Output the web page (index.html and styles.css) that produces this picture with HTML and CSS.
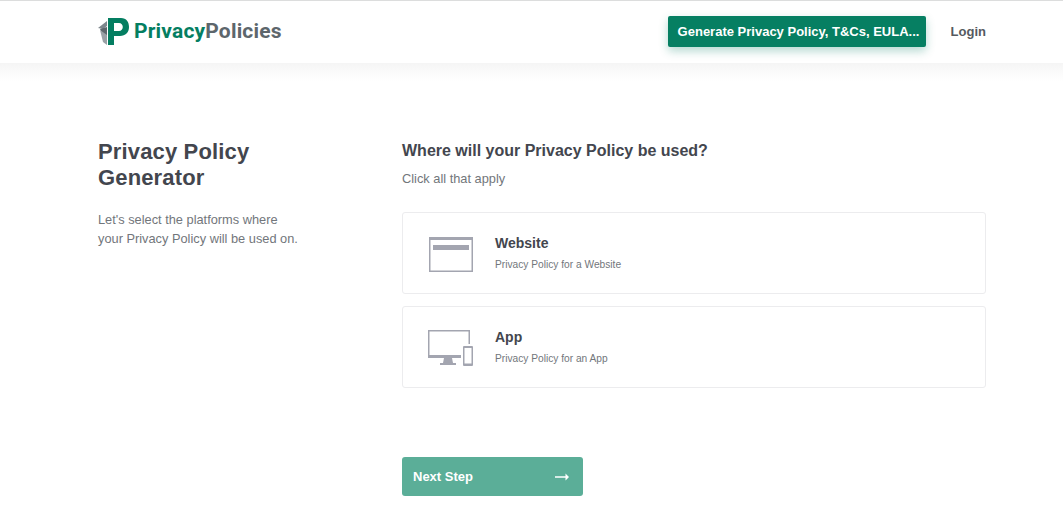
FILE: index.html
```html
<!DOCTYPE html>
<html lang="en">
<head>
<meta charset="utf-8">
<title>Privacy Policy Generator</title>
<link rel="stylesheet" href="styles.css">
</head>
<body>
<header class="header">
  <a class="logo" href="#">
    <svg class="logo-mark" width="32" height="28" viewBox="0 0 32 28">
      <path d="M9 3 L0 10 L5 11 L9 8 Z" fill="#7d868c"/>
      <path d="M9 9 L2 11 L7 21 L9 20 Z" fill="#5e676d"/>
      <path d="M9 17 L2 12 L5 24 L9 27 Z" fill="#9aa1a6"/>
      <path fill="#047e61" fill-rule="evenodd" d="M10 0 H23 C28.500 0 31 4 31 9 C31 14.500 27.500 18 22 18 H16 V27 H10 Z M16 5 V13 H21 C23.300 13 24.800 11.300 24.800 9 C24.800 6.700 23.300 5 21 5 Z"/>
    </svg>
    <span class="logo-text"><span class="logo-green">Privacy</span><span class="logo-gray">Policies</span></span>
  </a>
  <nav class="nav">
    <a class="cta" href="#">Generate Privacy Policy, T&amp;Cs, EULA...</a>
    <a class="login" href="#">Login</a>
  </nav>
</header>
<div class="header-fade"></div>
<main class="main">
  <aside class="intro">
    <h1 class="intro-title">Privacy Policy Generator</h1>
    <p class="intro-text">Let's select the platforms where<br>your Privacy Policy will be used on.</p>
  </aside>
  <section class="form">
    <h2 class="form-title">Where will your Privacy Policy be used?</h2>
    <p class="form-hint">Click all that apply</p>
    <div class="options">
      <div class="option">
        <svg class="option-icon" width="46" height="38" viewBox="0 0 46 38">
          <path fill="#a3a5b0" fill-rule="evenodd" d="M1 2 H45 V37 H1 Z M2.500 5 V35.500 H43.500 V5 Z"/>
          <rect x="5" y="10" width="36" height="5" fill="#a3a5b0"/>
        </svg>
        <div class="option-body">
          <div class="option-name">Website</div>
          <div class="option-desc">Privacy Policy for a Website</div>
        </div>
      </div>
      <div class="option">
        <svg class="option-icon" width="46" height="38" viewBox="0 0 46 38">
          <path fill="#a3a5b0" fill-rule="evenodd" d="M0 1 H42 V15 H40.500 V2.500 H1.500 V26 H33 V29 H0 Z"/>
          <path fill="#a3a5b0" d="M16 29 H24 L25 34 H28 V36 H12 V34 H15 Z"/>
          <path fill="#a3a5b0" fill-rule="evenodd" d="M36 17 H44 A1 1 0 0 1 45 18 V36 A1 1 0 0 1 44 37 H36 A1 1 0 0 1 35 36 V18 A1 1 0 0 1 36 17 Z M36.500 19 V34.500 H43.500 V19 Z"/>
        </svg>
        <div class="option-body">
          <div class="option-name">App</div>
          <div class="option-desc">Privacy Policy for an App</div>
        </div>
      </div>
    </div>
    <a class="next" href="#">
      <span>Next Step</span>
      <svg width="14" height="8" viewBox="0 0 14 8"><path d="M0 3.200 H10.500 V0.500 L14 4 L10.500 7.500 V4.800 H0 Z" fill="#fff"/></svg>
    </a>
  </section>
</main>
</body>
</html>
```
FILE: styles.css
```css
* { box-sizing: border-box; }
html, body { margin: 0; padding: 0; }
body {
  background: #fff;
  color: #43464e;
  font-family: "Liberation Sans", Arial, sans-serif;
  overflow: hidden;
}
a { text-decoration: none; }

.header {
  height: 63px;
  border-top: 1px solid #dcdddd;
  padding: 0 77px 1px 98px;
  display: flex;
  align-items: center;
  justify-content: space-between;
  background: #fff;
}
.logo { display: flex; align-items: center; gap: 4px; }
.logo-mark { display: block; }
.logo-text { font-family: Roboto, "Liberation Sans", sans-serif; font-size: 21px; font-weight: 700; letter-spacing: 0.18px; line-height: 24px; margin-top: -1px; }
.logo-green { color: #047e61; }
.logo-gray { color: #5d666c; }

.nav { display: flex; align-items: center; }
.cta {
  display: block;
  width: 258px;
  height: 31px;
  line-height: 31px;
  padding-left: 10px;
  background: #067f62;
  color: #fff;
  font-size: 13px;
  font-weight: 700;
  border-radius: 2px;
  box-shadow: 0 4px 10px rgba(6, 127, 98, 0.3);
  white-space: nowrap;
}
.login {
  margin-left: 25px;
  color: #555a5f;
  font-size: 13px;
  font-weight: 700;
}

.header-fade { height: 18px; background: linear-gradient(#f5f5f5, #fff); }

.main { display: flex; padding: 0 77px 0 98px; }
.intro { width: 304px; padding-top: 58px; }
.intro-title {
  margin: 0;
  width: 180px;
  font-size: 22px;
  line-height: 26px;
  font-weight: 700;
  color: #43464e;
  letter-spacing: 0.15px;
}
.intro-text {
  margin: 19px 0 0;
  font-size: 12.800px;
  line-height: 19px;
  color: #72767b;
}

.form { width: 584px; padding-top: 60px; }
.form-title { margin: 0; font-size: 16px; line-height: 20px; font-weight: 700; color: #43464e; }
.form-hint { margin: 9px 0 0; font-size: 12.800px; line-height: 18px; color: #72767b; }
.options { margin-top: 24px; display: flex; flex-direction: column; gap: 12px; }
.option {
  height: 82px;
  border: 1px solid #ececee;
  border-radius: 3px;
  background: #fff;
  display: flex;
  align-items: center;
  padding-left: 25px;
}
.option-icon { display: block; flex: none; margin-top: 1px; }
.option-body { margin: -2px 0 0 21px; }
.option-name { font-size: 14px; line-height: 18px; font-weight: 700; color: #43464e; }
.option-desc { margin-top: 7px; font-size: 10.200px; line-height: 12px; color: #72767b; }

.next {
  margin-top: 69px;
  width: 181px;
  height: 39px;
  padding: 0 14px 0 11px;
  display: flex;
  align-items: center;
  justify-content: space-between;
  background: #5bae98;
  color: #fff;
  border-radius: 3px;
  font-size: 13px;
  font-weight: 700;
}
```
